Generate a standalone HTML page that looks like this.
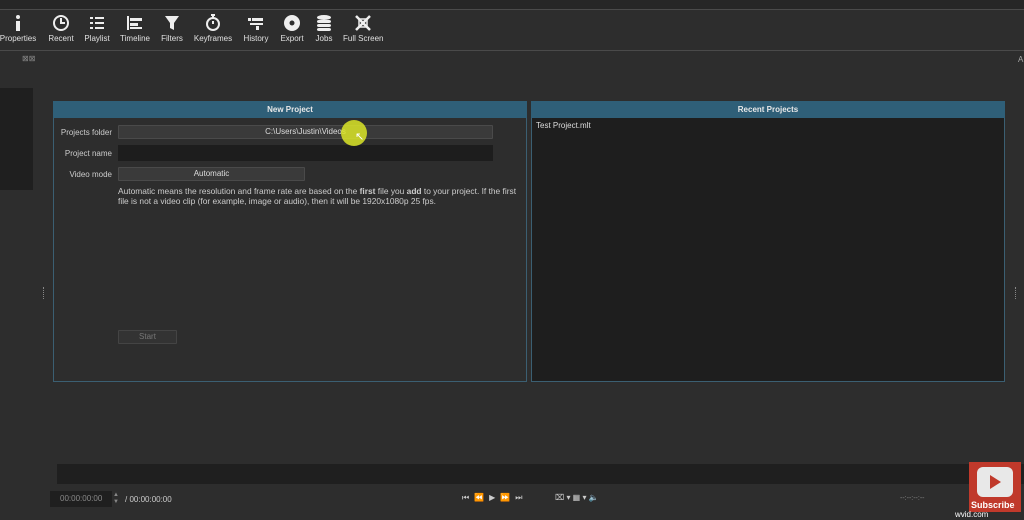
<!DOCTYPE html>
<html><head><meta charset="utf-8"><style>
*{margin:0;padding:0;box-sizing:border-box}
body{width:1024px;height:520px;background:#2d2d2d;font-family:"Liberation Sans",sans-serif;color:#ddd;position:relative;overflow:hidden;font-size:8px}
.a{position:absolute}
.tb{top:11px;height:38px;width:40px;text-align:center;font-size:8px;color:#e0e0e0;white-space:nowrap}
.tb svg{display:block;margin:3px auto 2px;width:18px;height:18px}
.lbl{font-size:8px;color:#ccc;text-align:right;width:60px}
.btn{background:#3a3a3a;border:1px solid #4a4a4a;text-align:center;color:#ddd;font-size:8px;line-height:12px;border-radius:1px}
</style></head><body>
<div class="a" style="left:0;top:0;width:1024px;height:9px;background:#262626"></div>
<div class="a" style="left:0;top:9px;width:1024px;height:1px;background:#4a4a4a"></div>
<div class="a" style="left:0;top:50px;width:1024px;height:1px;background:#4a4a4a"></div>

<div class="a tb" style="left:-2px"><svg viewBox="0 0 18 18"><circle cx="9" cy="3" r="2" fill="#eee"/><rect x="7" y="7" width="4" height="10" fill="#eee"/></svg>Properties</div>
<div class="a tb" style="left:41px"><svg viewBox="0 0 18 18"><circle cx="9" cy="9" r="7" fill="none" stroke="#eee" stroke-width="2"/><path d="M9 4v5h4" stroke="#eee" stroke-width="2" fill="none"/></svg>Recent</div>
<div class="a tb" style="left:77px"><svg viewBox="0 0 18 18"><g fill="#eee"><rect x="2" y="3" width="3" height="2"/><rect x="7" y="3" width="9" height="2"/><rect x="2" y="8" width="3" height="2"/><rect x="7" y="8" width="9" height="2"/><rect x="2" y="13" width="3" height="2"/><rect x="7" y="13" width="9" height="2"/></g></svg>Playlist</div>
<div class="a tb" style="left:115px"><svg viewBox="0 0 18 18"><g fill="#eee"><rect x="1" y="2" width="2" height="14"/><rect x="4" y="4" width="12" height="3"/><rect x="4" y="9" width="8" height="3"/><rect x="4" y="13" width="12" height="2"/></g></svg>Timeline</div>
<div class="a tb" style="left:152px"><svg viewBox="0 0 18 18"><path d="M2 2h14l-5 7v7l-4-2v-5z" fill="#eee"/></svg>Filters</div>
<div class="a tb" style="left:193px"><svg viewBox="0 0 18 18"><circle cx="9" cy="10" r="6" fill="none" stroke="#eee" stroke-width="2"/><path d="M7 1h4M9 1v3M9 10V7" stroke="#eee" stroke-width="2"/></svg>Keyframes</div>
<div class="a tb" style="left:236px"><svg viewBox="0 0 18 18"><g fill="#eee"><rect x="5" y="4" width="11" height="3"/><rect x="1" y="4" width="3" height="3"/><rect x="3" y="9" width="13" height="2"/><rect x="9" y="12" width="3" height="4"/></g></svg>History</div>
<div class="a tb" style="left:272px"><svg viewBox="0 0 18 18"><circle cx="9" cy="9" r="8" fill="#eee"/><circle cx="9" cy="9" r="2.5" fill="#2d2d2d"/></svg>Export</div>
<div class="a tb" style="left:304px"><svg viewBox="0 0 18 18"><g fill="#eee"><ellipse cx="9" cy="3.5" rx="7" ry="2.5"/><rect x="2" y="6" width="14" height="3" rx="2"/><rect x="2" y="10" width="14" height="3" rx="2"/><rect x="2" y="14" width="14" height="3" rx="2"/></g></svg>Jobs</div>
<div class="a tb" style="left:343px"><svg viewBox="0 0 18 18"><path d="M2 2l14 14M16 2L2 16" stroke="#eee" stroke-width="2.5"/><rect x="5" y="5" width="8" height="8" fill="none" stroke="#eee" stroke-width="1.5"/></svg>Full Screen</div>

<div class="a" style="left:22px;top:54px;font-size:8px;color:#888">⊠⊠</div>
<div class="a" style="left:0;top:88px;width:33px;height:102px;background:#1f1f1f"></div>
<div class="a" style="left:43px;top:287px;width:2px;height:12px;border-left:1px dotted #888"></div>
<div class="a" style="left:1015px;top:287px;width:2px;height:12px;border-left:1px dotted #888"></div>

<div class="a" style="left:53px;top:101px;width:474px;height:281px;border:1px solid #3b5f72;background:#2d2d2d"></div>
<div class="a" style="left:53px;top:101px;width:474px;height:17px;background:#2f5f78;text-align:center;font-weight:bold;line-height:17px;font-size:8px;color:#e8e8e8">New Project</div>
<div class="a lbl" style="left:52px;top:128px">Projects folder</div>
<div class="a btn" style="left:118px;top:125px;width:375px;height:14px">C:\Users\Justin\Videos</div>
<div class="a lbl" style="left:52px;top:149px">Project name</div>
<div class="a" style="left:118px;top:145px;width:375px;height:16px;background:#1d1d1d"></div>
<div class="a lbl" style="left:52px;top:170px">Video mode</div>
<div class="a btn" style="left:118px;top:167px;width:187px;height:14px">Automatic</div>
<div class="a" style="left:118px;top:186px;font-size:8.4px;line-height:10px;color:#ccc;white-space:nowrap">Automatic means the resolution and frame rate are based on the <b>first</b> file you <b>add</b> to your project. If the first<br>file is not a video clip (for example, image or audio), then it will be 1920x1080p 25 fps.</div>
<div class="a btn" style="left:118px;top:330px;width:59px;height:14px;color:#777;background:#333;border-color:#444">Start</div>
<div class="a" style="left:341px;top:120px;width:26px;height:26px;border-radius:50%;background:rgba(220,230,40,.85)"></div>
<div class="a" style="left:355px;top:130px;font-size:11px;color:#fff">&#x2196;</div>

<div class="a" style="left:531px;top:101px;width:474px;height:281px;border:1px solid #3b5f72;background:#1e1e1e"></div>
<div class="a" style="left:531px;top:101px;width:474px;height:17px;background:#2f5f78;text-align:center;font-weight:bold;line-height:17px;font-size:8px;color:#e8e8e8">Recent Projects</div>
<div class="a" style="left:536px;top:121px;font-size:8px;color:#ddd">Test Project.mlt</div>

<div class="a" style="left:1018px;top:55px;font-size:8px;color:#aaa">A</div>

<div class="a" style="left:57px;top:464px;width:967px;height:20px;background:#1f1f1f"></div>
<div class="a" style="left:50px;top:491px;width:62px;height:16px;background:#1f1f1f;color:#888;font-size:8px;line-height:16px;padding-left:10px">00:00:00:00</div>
<div class="a" style="left:113px;top:492px;font-size:6px;color:#888;line-height:7px">▲<br>▼</div>
<div class="a" style="left:125px;top:495px;font-size:8px;color:#ccc">/ 00:00:00:00</div>
<div class="a" style="left:462px;top:493px;font-size:8px;color:#ccc;letter-spacing:5px">⏮⏪▶⏩⏭</div>
<div class="a" style="left:555px;top:493px;font-size:8px;color:#ccc">⌧ ▾ ▦ ▾ 🔈</div>
<div class="a" style="left:900px;top:495px;font-size:7px;color:#888">--:--:--:--</div>
<div class="a" style="left:969px;top:462px;width:52px;height:50px;background:#c0392b"></div>
<div class="a" style="left:977px;top:467px;width:36px;height:30px;background:#e8e8e8;border-radius:6px"></div>
<div class="a" style="left:990px;top:475px;width:0;height:0;border-left:11px solid #c0392b;border-top:7px solid transparent;border-bottom:7px solid transparent"></div>
<div class="a" style="left:971px;top:500px;font-size:9px;font-weight:bold;color:#fff">Subscribe</div>
<div class="a" style="left:955px;top:510px;font-size:8px;color:#fff">wvid.com</div>
</body></html>
